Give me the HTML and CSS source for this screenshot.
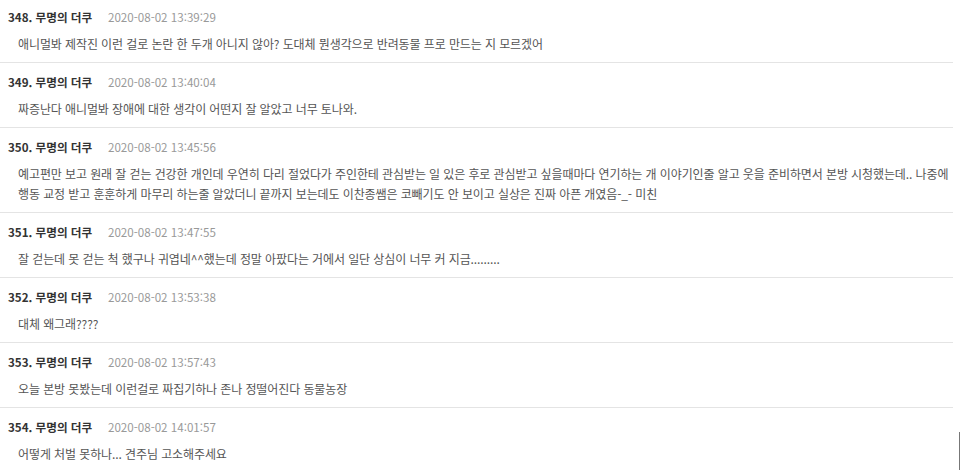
FILE: index.html
```html
<!DOCTYPE html>
<html lang="ko">
<head>
<meta charset="utf-8">
<title>댓글</title>
<link rel="stylesheet" href="styles.css">
</head>
<body>
<ul class="comments">
  <li class="item">
    <div class="meta"><span class="author">348. 무명의 더쿠</span><span class="date">2020-08-02 13:39:29</span></div>
    <p class="text">애니멀봐 제작진 이런 걸로 논란 한 두개 아니지 않아? 도대체 뭔생각으로 반려동물 프로 만드는 지 모르겠어</p>
  </li>
  <li class="item">
    <div class="meta"><span class="author">349. 무명의 더쿠</span><span class="date">2020-08-02 13:40:04</span></div>
    <p class="text">짜증난다 애니멀봐 장애에 대한 생각이 어떤지 잘 알았고 너무 토나와.</p>
  </li>
  <li class="item">
    <div class="meta"><span class="author">350. 무명의 더쿠</span><span class="date">2020-08-02 13:45:56</span></div>
    <p class="text">예고편만 보고 원래 잘 걷는 건강한 개인데 우연히 다리 절었다가 주인한테 관심받는 일 있은 후로 관심받고 싶을때마다 연기하는 개 이야기인줄 알고 웃을 준비하면서 본방 시청했는데.. 나중에 행동 교정 받고 훈훈하게 마무리 하는줄 알았더니 끝까지 보는데도 이찬종쌤은 코빼기도 안 보이고 실상은 진짜 아픈 개였음-_- 미친</p>
  </li>
  <li class="item">
    <div class="meta"><span class="author">351. 무명의 더쿠</span><span class="date">2020-08-02 13:47:55</span></div>
    <p class="text">잘 걷는데 못 걷는 척 했구나 귀엽네^^했는데 정말 아팠다는 거에서 일단 상심이 너무 커 지금.........</p>
  </li>
  <li class="item">
    <div class="meta"><span class="author">352. 무명의 더쿠</span><span class="date">2020-08-02 13:53:38</span></div>
    <p class="text">대체 왜그래????</p>
  </li>
  <li class="item">
    <div class="meta"><span class="author">353. 무명의 더쿠</span><span class="date">2020-08-02 13:57:43</span></div>
    <p class="text">오늘 본방 못봤는데 이런걸로 짜집기하나 존나 정떨어진다 동물농장</p>
  </li>
  <li class="item">
    <div class="meta"><span class="author">354. 무명의 더쿠</span><span class="date">2020-08-02 14:01:57</span></div>
    <p class="text">어떻게 처벌 못하나... 견주님 고소해주세요</p>
  </li>
</ul>
<div class="scroll-edge"></div>
</body>
</html>
```
FILE: styles.css
```css
html, body {
  margin: 0;
  padding: 0;
  background: #fff;
}
body {
  font-family: "Noto Sans CJK KR", "Noto Sans", sans-serif;
  width: 960px;
  height: 470px;
  overflow: hidden;
  position: relative;
}
.comments {
  list-style: none;
  margin: 0;
  padding: 0 7px 0 0;
}
.item {
  padding: 10px 0 8px 8px;
  border-bottom: 1px solid #e4e4e4;
}
.item:first-child {
  padding-top: 8px;
}
.meta {
  display: flex;
  align-items: center;
  height: 18px;
  margin-bottom: 8px;
}
.author {
  font-size: 11.6px;
  font-weight: 700;
  color: #333;
  width: 100px;
}
.date {
  font-size: 11.6px;
  color: #999;
}
.text {
  margin: 0;
  padding: 0 0 0 10px;
  font-size: 12px;
  letter-spacing: -0.1px;
  line-height: 20px;
  color: #555;
}
.scroll-edge {
  position: absolute;
  right: 0;
  top: 432px;
  width: 1px;
  height: 38px;
  background: #777;
}
```
